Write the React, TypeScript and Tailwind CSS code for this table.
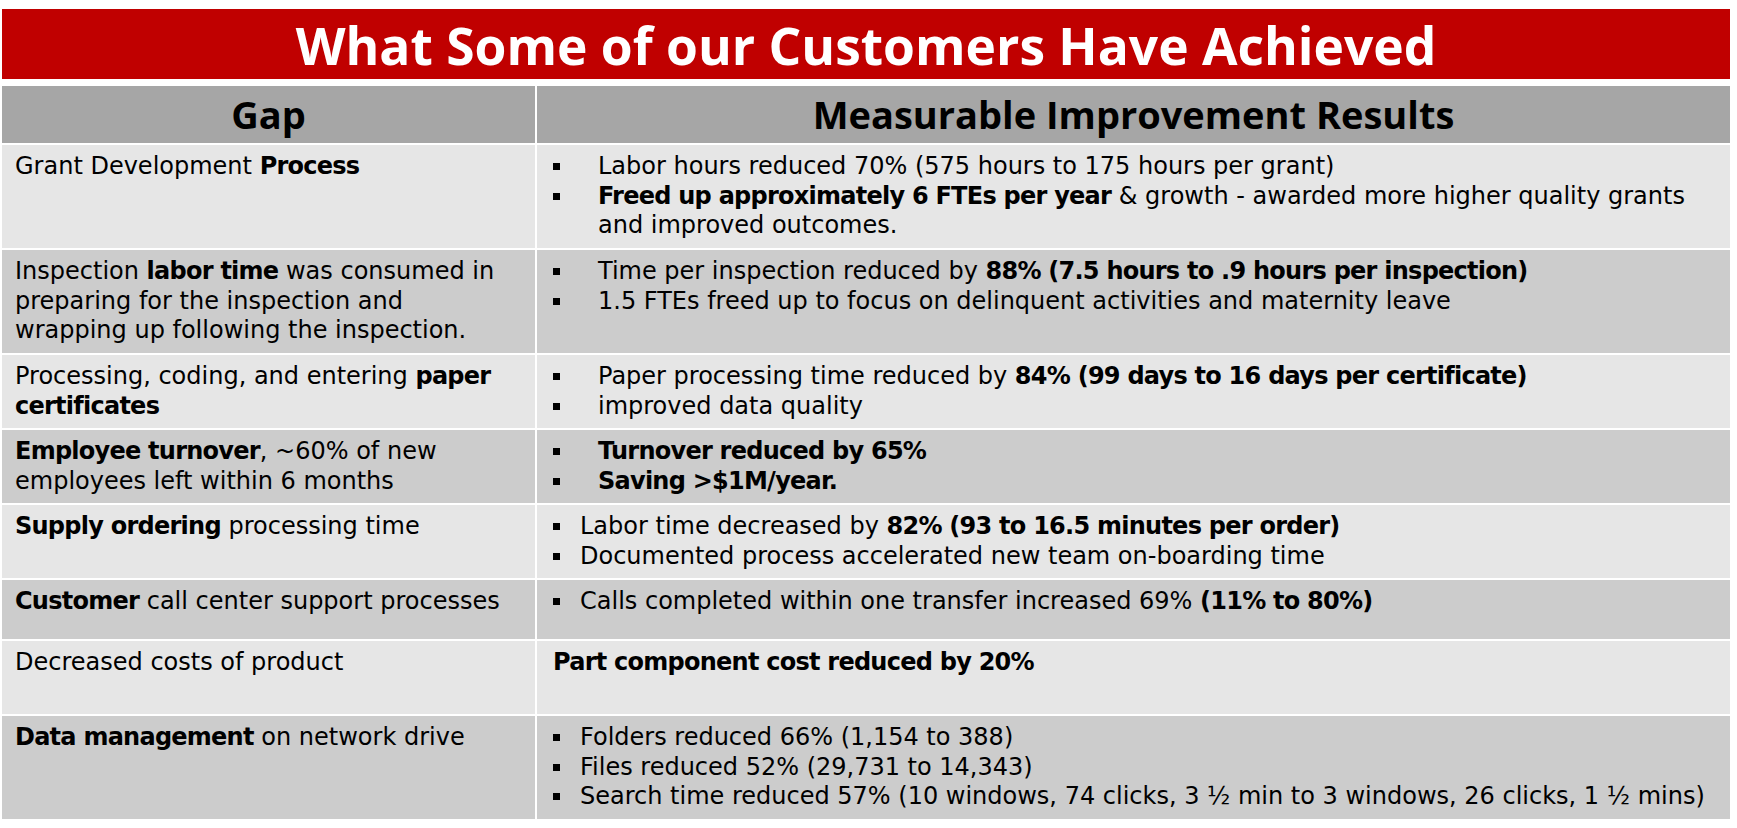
import React from "react";

const LIGHT = "bg-[#e6e6e6]";
const DARK = "bg-[#cccccc]";

function B({ children }: { children: React.ReactNode }) {
  return <b className="font-bold tracking-[-0.75px]">{children}</b>;
}

function Bullet({ wide, children }: { wide?: boolean; children: React.ReactNode }) {
  return (
    <div className="flex leading-[29.5px]">
      <span className={`flex h-[29.5px] shrink-0 items-center ${wide ? "w-[45px]" : "w-[27px]"}`}>
        <span className="block h-[7px] w-[7px] bg-black" />
      </span>
      <span className="whitespace-nowrap">{children}</span>
    </div>
  );
}

function Row({
  h,
  bg,
  left,
  children,
}: {
  h: string;
  bg: string;
  left: React.ReactNode;
  children: React.ReactNode;
}) {
  return (
    <div className={`grid grid-cols-[533px_1193px] gap-x-[2px] ${h}`}>
      <div className={`${bg} whitespace-nowrap pl-[13px] pt-[7px] leading-[29.5px]`}>{left}</div>
      <div className={`${bg} pl-[16px] pt-[7px] leading-[29.5px]`}>{children}</div>
    </div>
  );
}

export default function App() {
  return (
    <div className="h-[828px] w-[1737px] bg-white pl-[2px] pt-[9px] font-['DejaVu_Sans',sans-serif] text-[24px] text-black">
      <div className="flex h-[70px] w-[1728px] items-center justify-center bg-[#c00000] pt-[2px] font-['Open_Sans',sans-serif] text-[51.5px] font-bold leading-[70px] text-white">
        What Some of our Customers Have Achieved
      </div>
      <div className="mt-[7px] flex w-[1728px] flex-col gap-y-[2px]">
        <div className="grid h-[57px] grid-cols-[533px_1193px] gap-x-[2px] font-['Open_Sans',sans-serif] text-[38px] font-bold">
          <div className="flex items-center justify-center bg-[#a6a6a6]">Gap</div>
          <div className="flex items-center justify-center bg-[#a6a6a6]">Measurable Improvement Results</div>
        </div>

        <Row
          h="h-[103px]"
          bg={LIGHT}
          left={
            <>
              Grant Development <B>Process</B>
            </>
          }
        >
          <Bullet wide>Labor hours reduced 70% (575 hours to 175 hours per grant)</Bullet>
          <Bullet wide>
            <B>Freed up approximately 6 FTEs per year</B> &amp; growth - awarded more higher quality grants
            <br />
            and improved outcomes.
          </Bullet>
        </Row>

        <Row
          h="h-[103px]"
          bg={DARK}
          left={
            <>
              Inspection <B>labor time</B> was consumed in
              <br />
              preparing for the inspection and
              <br />
              wrapping up following the inspection.
            </>
          }
        >
          <Bullet wide>
            Time per inspection reduced by <B>88% (7.5 hours to .9 hours per inspection)</B>
          </Bullet>
          <Bullet wide>1.5 FTEs freed up to focus on delinquent activities and maternity leave</Bullet>
        </Row>

        <Row
          h="h-[73px]"
          bg={LIGHT}
          left={
            <>
              Processing, coding, and entering <B>paper</B>
              <br />
              <B>certificates</B>
            </>
          }
        >
          <Bullet wide>
            Paper processing time reduced by <B>84% (99 days to 16 days per certificate)</B>
          </Bullet>
          <Bullet wide>improved data quality</Bullet>
        </Row>

        <Row
          h="h-[73px]"
          bg={DARK}
          left={
            <>
              <B>Employee turnover</B>, ~60% of new
              <br />
              employees left within 6 months
            </>
          }
        >
          <Bullet wide>
            <B>Turnover reduced by 65%</B>
          </Bullet>
          <Bullet wide>
            <B>Saving &gt;$1M/year.</B>
          </Bullet>
        </Row>

        <Row
          h="h-[73px]"
          bg={LIGHT}
          left={
            <>
              <B>Supply ordering</B> processing time
            </>
          }
        >
          <Bullet>
            Labor time decreased by <B>82% (93 to 16.5 minutes per order)</B>
          </Bullet>
          <Bullet>Documented process accelerated new team on-boarding time</Bullet>
        </Row>

        <Row
          h="h-[59px]"
          bg={DARK}
          left={
            <>
              <B>Customer</B> call center support processes
            </>
          }
        >
          <Bullet>
            Calls completed within one transfer increased 69% <B>(11% to 80%)</B>
          </Bullet>
        </Row>

        <Row h="h-[73px]" bg={LIGHT} left={<>Decreased costs of product</>}>
          <div className="whitespace-nowrap">
            <B>Part component cost reduced by 20%</B>
          </div>
        </Row>

        <Row
          h="h-[103px]"
          bg={DARK}
          left={
            <>
              <B>Data management</B> on network drive
            </>
          }
        >
          <Bullet>Folders reduced 66% (1,154 to 388)</Bullet>
          <Bullet>Files reduced 52% (29,731 to 14,343)</Bullet>
          <Bullet>Search time reduced 57% (10 windows, 74 clicks, 3 ½ min to 3 windows, 26 clicks, 1 ½ mins)</Bullet>
        </Row>
      </div>
    </div>
  );
}
